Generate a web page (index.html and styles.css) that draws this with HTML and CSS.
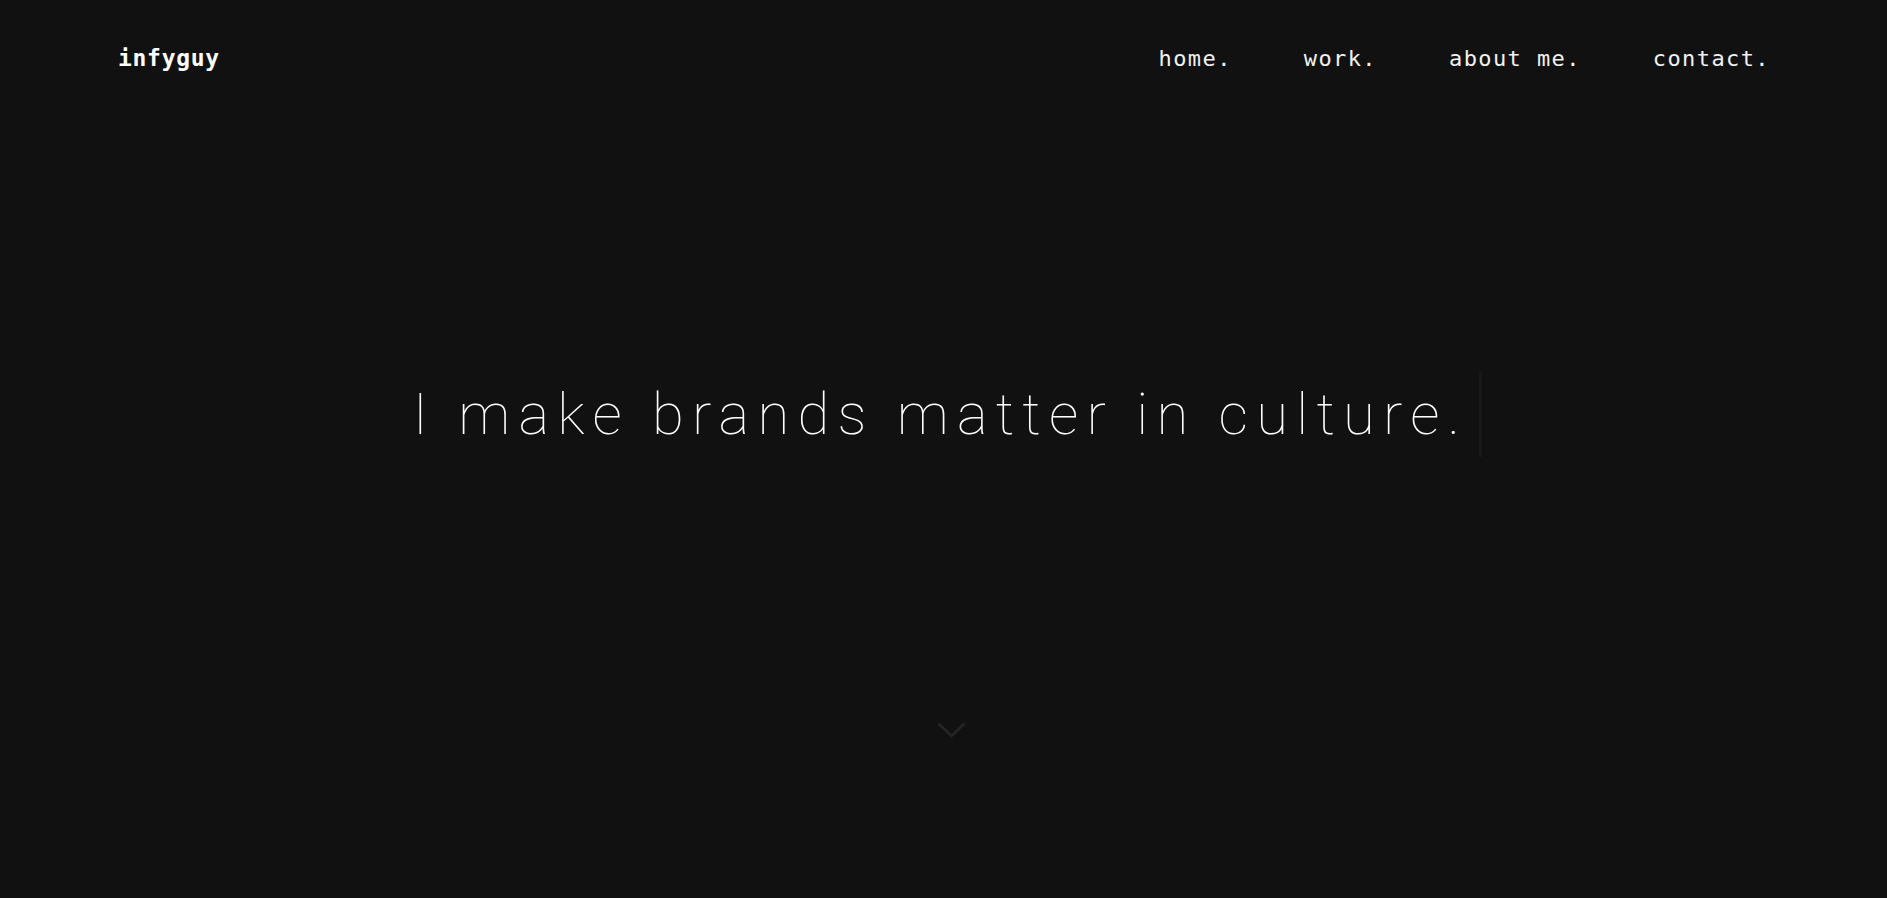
FILE: index.html
```
<!DOCTYPE html>
<html lang="en">
<head>
<meta charset="utf-8">
<title>infyguy</title>
<link rel="stylesheet" href="styles.css">
</head>
<body>
<header class="site-header">
  <a class="logo" href="#">infyguy</a>
  <nav class="nav">
    <a class="nav-link" href="#">home.</a>
    <a class="nav-link" href="#">work.</a>
    <a class="nav-link" href="#">about me.</a>
    <a class="nav-link" href="#">contact.</a>
  </nav>
</header>
<main class="hero">
  <h1 class="headline"><span class="headline-text">I make brands matter in culture.</span><span class="cursor"></span></h1>
  <a class="scroll-down" href="#">
    <svg width="30" height="16" viewBox="0 0 30 16" fill="none"><polyline points="1.5,1.5 14.5,14 27.5,1.5" stroke="#262626" stroke-width="2.5"/></svg>
  </a>
</main>
</body>
</html>
```
FILE: styles.css
```
html, body {
  margin: 0;
  padding: 0;
  background: #111111;
  height: 100%;
}
body {
  color: #ffffff;
  font-family: "DejaVu Sans Mono", monospace;
  overflow: hidden;
}
a { color: inherit; text-decoration: none; }
.site-header {
  height: 114px;
  padding: 0 117px 0 118px;
  display: flex;
  align-items: center;
  justify-content: space-between;
}
.logo {
  font-family: "DejaVu Sans Mono", monospace;
  font-weight: bold;
  font-size: 23px;
  letter-spacing: 0.7px;
  padding-top: 2px;
}
.nav {
  display: flex;
  gap: 72px;
  padding-top: 2px;
}
.nav-link {
  font-family: "DejaVu Sans Mono", monospace;
  font-size: 22px;
  letter-spacing: 1.4px;
  color: #f2f2f2;
}
.hero {
  display: flex;
  flex-direction: column;
  align-items: center;
  padding-top: 257px;
}
.headline {
  margin: 0;
  display: flex;
  align-items: stretch;
  height: 86px;
  font-family: "Roboto", sans-serif;
  font-weight: 100;
  font-size: 58px;
  line-height: 86px;
  letter-spacing: 8.25px;
  color: #ffffff;
  padding-left: 8px;
}
.headline-text {
  white-space: pre;
}
.cursor {
  width: 3px;
  margin-left: 11px;
  background: #181818;
}
.scroll-down {
  margin-top: 265px;
  margin-left: 17px;
  display: block;
  line-height: 0;
}
```
